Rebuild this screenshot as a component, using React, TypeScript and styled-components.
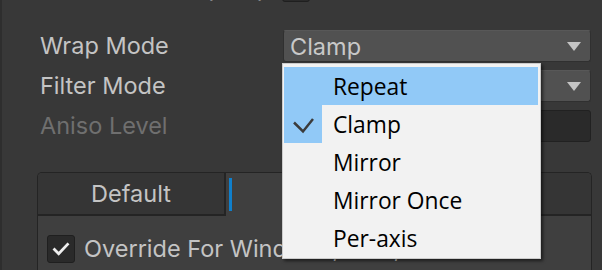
import React from "react";
import styled, { createGlobalStyle } from "styled-components";

const GlobalStyle = createGlobalStyle`
  html, body {
    margin: 0;
    padding: 0;
    background: #383838;
  }
`;

const Page = styled.div`
  position: relative;
  width: 602px;
  height: 270px;
  overflow: hidden;
  box-sizing: border-box;
  background: #383838;
  border-left: 2px solid #2e2e2e;
  padding: 0 10px 0 35px;
  display: flex;
  flex-direction: column;
  font-family: Inter, "Liberation Sans", sans-serif;
`;

const PropRow = styled.div<{ $gap?: number }>`
  display: grid;
  grid-template-columns: 246px 308px;
  align-items: center;
  height: 32px;
  flex-shrink: 0;
  margin-top: ${(p) => (p.$gap ?? 8)}px;
`;

const Label = styled.div<{ $indent?: number; $disabled?: boolean }>`
  padding-left: ${(p) => p.$indent ?? 3}px;
  font-size: 23.5px;
  line-height: 32px;
  white-space: nowrap;
  color: ${(p) => (p.$disabled ? "#6f6f6f" : "#c4c4c4")};
`;

const Dropdown = styled.div`
  height: 32px;
  box-sizing: border-box;
  background: #515151;
  border: 1px solid #303030;
  border-top-color: #585858;
  border-radius: 3px;
  display: flex;
  align-items: center;
  justify-content: space-between;
  padding: 0 9px 0 6px;
  font-size: 23.5px;
  color: #c8c8c8;
`;

const Arrow = styled.span`
  width: 0;
  height: 0;
  border-left: 7.5px solid transparent;
  border-right: 7.5px solid transparent;
  border-top: 9px solid #c4c4c4;
`;

const NumberField = styled.div`
  height: 32px;
  box-sizing: border-box;
  background: #2a2a2a;
  border: 1px solid #212121;
  border-radius: 3px;
`;

const Toggle = styled.span`
  display: inline-flex;
  align-items: center;
  justify-content: center;
  width: 28px;
  height: 28px;
  box-sizing: border-box;
  background: #2a2a2a;
  border: 1px solid #1f1f1f;
  border-radius: 3px;
  flex-shrink: 0;
`;

const TabBox = styled.div`
  margin-top: 30px;
  width: 555px;
  flex: 1;
  box-sizing: border-box;
  border: 1px solid #242424;
  border-bottom: none;
  border-radius: 5px 5px 0 0;
  background: #3f3f3f;
  display: flex;
  flex-direction: column;
  overflow: hidden;
`;

const TabStrip = styled.div`
  display: flex;
  height: 43px;
  flex-shrink: 0;
`;

const Tab = styled.div<{ $active?: boolean; $width?: number }>`
  box-sizing: border-box;
  ${(p) => (p.$width ? `width: ${p.$width}px;` : "flex: 1;")}
  display: flex;
  align-items: center;
  justify-content: ${(p) => (p.$active ? "flex-start" : "center")};
  padding-left: ${(p) => (p.$active ? 3 : 0)}px;
  background: ${(p) => (p.$active ? "transparent" : "#353535")};
  border-bottom: ${(p) => (p.$active ? "none" : "2px solid #242424")};
  border-right: 2px solid #242424;
  font-size: 23.5px;
  color: #c4c4c4;

  &:last-child {
    border-right: none;
  }
`;

const PlatformMark = styled.span`
  width: 3px;
  height: 33px;
  background: #0f7fcb;
`;

const TabBody = styled.div`
  padding: 18px 9px;
  display: flex;
  align-items: center;
  gap: 9px;
  font-size: 23.5px;
  color: #c4c4c4;
  white-space: nowrap;
`;

const Menu = styled.div`
  position: absolute;
  left: 280px;
  top: 63px;
  width: 259px;
  box-sizing: border-box;
  padding: 3px 2px 1px 1px;
  background: #f2f2f2;
  border: 1px solid #cccccc;
  box-shadow: 2px 2px 3px rgba(0, 0, 0, 0.55);
  font-family: "Open Sans", "Noto Sans", sans-serif;
`;

const MenuItem = styled.div<{ $hover?: boolean }>`
  display: flex;
  height: 38px;
  background: ${(p) => (p.$hover ? "#91c9f7" : "transparent")};
`;

const CheckCell = styled.div<{ $checked?: boolean }>`
  width: 38px;
  flex-shrink: 0;
  display: flex;
  background: ${(p) => (p.$checked ? "#91c9f7" : "transparent")};
`;

const ItemText = styled.div`
  padding: 1px 0 0 11px;
  font-size: 22.8px;
  line-height: 38px;
  color: #000;
  white-space: nowrap;
`;

const wrapModes = ["Repeat", "Clamp", "Mirror", "Mirror Once", "Per-axis"];

const CheckIcon = ({ color, width }: { color: string; width: number }) => (
  <svg width="28" height="28" viewBox="0 0 28 28">
    <polyline
      points="7,14.5 11.5,19 21,9"
      fill="none"
      stroke={color}
      strokeWidth={width}
      strokeLinecap="square"
    />
  </svg>
);

export default function App() {
  return (
    <>
      <GlobalStyle />
      <Page>
        <PropRow $gap={-28}>
          <Label $indent={36}>Generate Mipmap</Label>
          <Toggle style={{ marginLeft: -1 }} />
        </PropRow>

        <PropRow $gap={26}>
          <Label>Wrap Mode</Label>
          <Dropdown>
            <span>Clamp</span>
            <Arrow />
          </Dropdown>
        </PropRow>

        <PropRow>
          <Label>Filter Mode</Label>
          <Dropdown>
            <span>Bilinear</span>
            <Arrow />
          </Dropdown>
        </PropRow>

        <PropRow>
          <Label $disabled>Aniso Level</Label>
          <NumberField />
        </PropRow>

        <TabBox>
          <TabStrip>
            <Tab $width={188}>Default</Tab>
            <Tab $active $width={186}>
              <PlatformMark />
            </Tab>
            <Tab />
          </TabStrip>
          <TabBody>
            <Toggle>
              <CheckIcon color="#eeeeee" width={3} />
            </Toggle>
            <span>Override For Windows, Mac, Linux</span>
          </TabBody>
        </TabBox>

        <Menu>
          {wrapModes.map((mode, i) => (
            <MenuItem key={mode} $hover={i === 0}>
              <CheckCell $checked={mode === "Clamp"}>
                {mode === "Clamp" && (
                  <svg width="38" height="38" viewBox="0 0 38 38">
                    <polyline
                      points="10,17.5 19,26.5 29,14"
                      fill="none"
                      stroke="#3b3b3b"
                      strokeWidth="2.5"
                    />
                  </svg>
                )}
              </CheckCell>
              <ItemText>{mode}</ItemText>
            </MenuItem>
          ))}
        </Menu>
      </Page>
    </>
  );
}
